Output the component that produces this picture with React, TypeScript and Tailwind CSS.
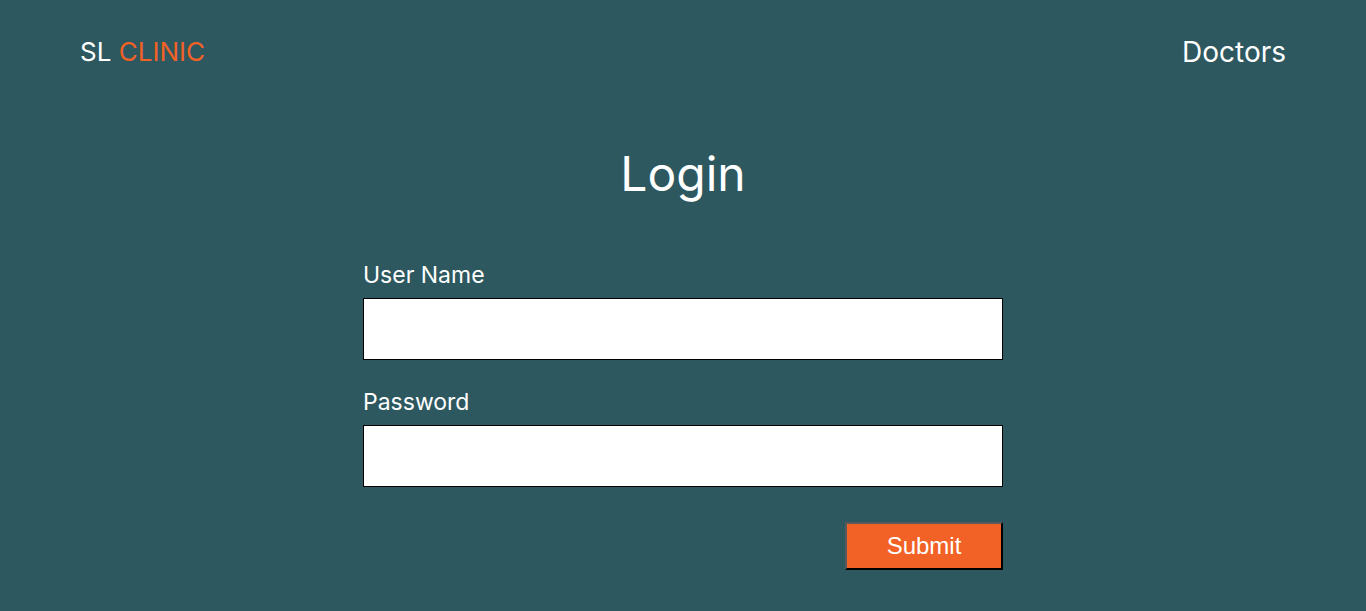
export default function App() {
  return (
    <div className="min-h-[611px] bg-[#2d5860] font-['Inter',sans-serif] text-white">
      <nav className="flex items-center justify-between px-20 pt-[34px]">
        <a href="#" className="text-[26px] leading-9">
          SL <span className="text-[#f26125]">CLINIC</span>
        </a>
        <a href="#" className="text-[28px] leading-9">
          Doctors
        </a>
      </nav>

      <main className="mx-auto w-[640px]">
        <h1 className="mt-[74px] text-center text-[48px] leading-[60px]">Login</h1>
        <form className="mt-[57px] flex flex-col">
          <label className="text-[23px] leading-7">User Name</label>
          <input className="mt-[9px] h-[62px] border border-black bg-white px-3 text-black outline-none" />
          <label className="mt-[28px] text-[23px] leading-7">Password</label>
          <input
            type="password"
            className="mt-[9px] h-[62px] border border-black bg-white px-3 text-black outline-none"
          />
          <div className="mt-[35px] flex justify-end">
            <button
              type="submit"
              className="h-[48px] w-[158px] border-2 border-t-[#5a5a5a] border-l-[#5a5a5a] border-r-black border-b-black bg-[#f26125] font-['Liberation_Sans',sans-serif] text-[24px]"
            >
              Submit
            </button>
          </div>
        </form>
      </main>
    </div>
  );
}
